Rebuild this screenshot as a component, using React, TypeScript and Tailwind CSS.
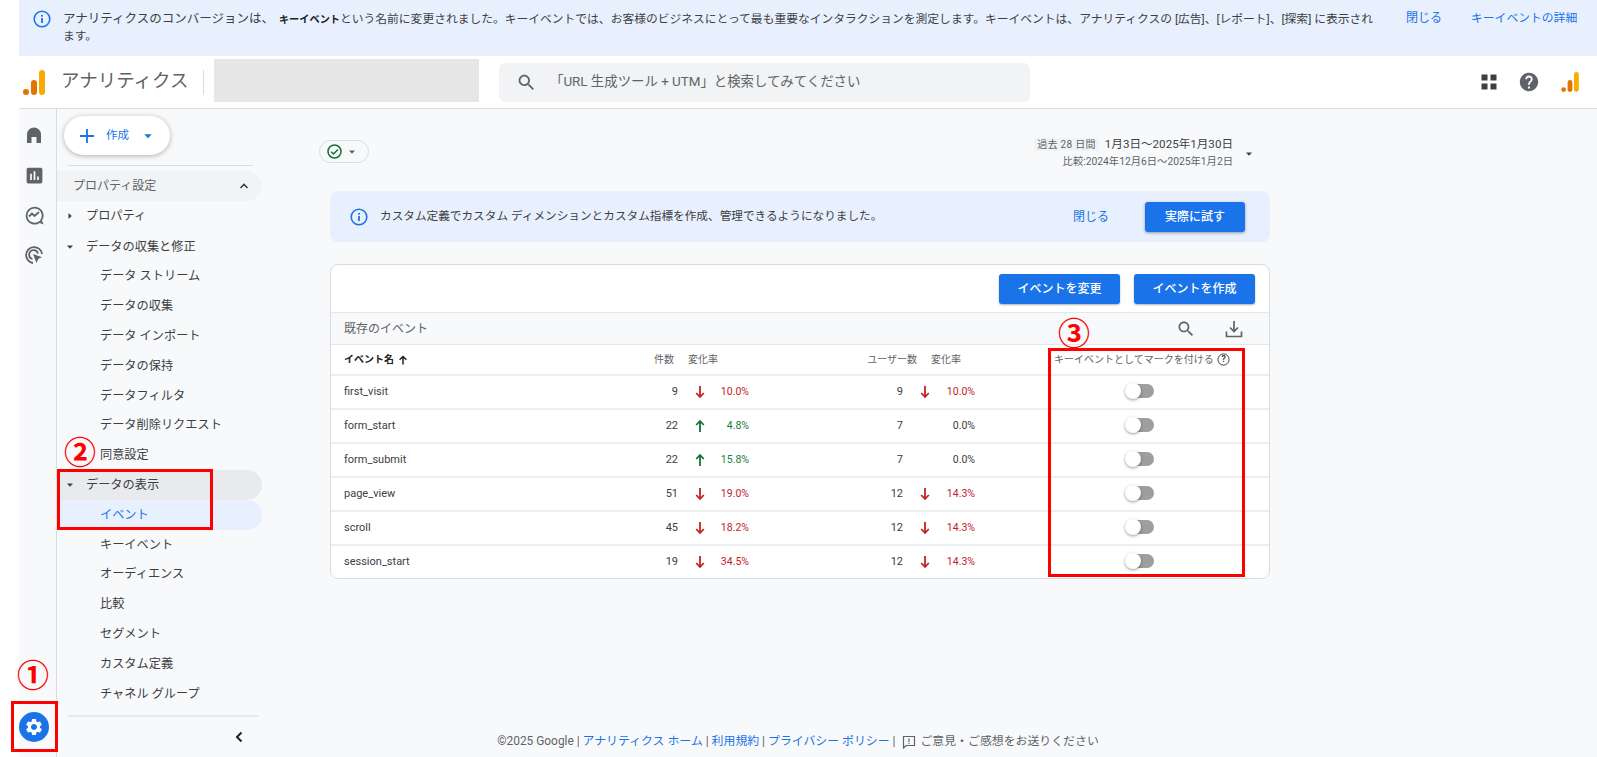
import React from "react";

const GEAR = "M19.14 12.94c.04-.3.06-.61.06-.94 0-.32-.02-.64-.07-.94l2.03-1.58c.18-.14.23-.41.12-.61l-1.92-3.32c-.12-.22-.37-.29-.59-.22l-2.39.96c-.5-.38-1.03-.7-1.62-.94l-.36-2.54c-.04-.24-.24-.41-.48-.41h-3.84c-.24 0-.43.17-.47.41l-.36 2.54c-.59.24-1.13.57-1.62.94l-2.39-.96c-.22-.08-.47 0-.59.22L2.74 8.87c-.12.21-.08.47.12.61l2.03 1.58c-.05.3-.09.63-.09.94s.02.64.07.94l-2.03 1.58c-.18.14-.23.41-.12.61l1.92 3.32c.12.22.37.29.59.22l2.39-.96c.5.38 1.03.7 1.62.94l.36 2.54c.05.24.24.41.48.41h3.84c.24 0 .44-.17.47-.41l.36-2.54c.59-.24 1.13-.56 1.62-.94l2.39.96c.22.08.47 0 .59-.22l1.92-3.32c.12-.22.07-.47-.12-.61l-2.01-1.58zM12 15.6c-1.98 0-3.6-1.62-3.6-3.6s1.62-3.6 3.6-3.6 3.6 1.62 3.6 3.6-1.62 3.6-3.6 3.6z";
const SEARCH = "M15.5 14h-.79l-.28-.27C15.41 12.59 16 11.11 16 9.5 16 5.91 13.09 3 9.5 3S3 5.91 3 9.5 5.91 16 9.5 16c1.61 0 3.09-.59 4.23-1.57l.27.28v.79l5 4.99L20.49 19l-4.99-5zm-6 0C7.01 14 5 11.99 5 9.5S7.01 5 9.5 5 14 7.01 14 9.5 11.99 14 9.5 14z";
const HELP = "M12 2C6.48 2 2 6.48 2 12s4.48 10 10 10 10-4.48 10-10S17.52 2 12 2zm1 17h-2v-2h2v2zm2.07-7.75l-.9.92C13.45 12.9 13 13.5 13 15h-2v-.5c0-1.1.45-2.1 1.17-2.83l1.24-1.26c.37-.36.59-.86.59-1.41 0-1.1-.9-2-2-2s-2 .9-2 2H8c0-2.21 1.79-4 4-4s4 1.79 4 4c0 .88-.36 1.68-.93 2.25z";

function Logo({ w, h }: { w: number; h: number }) {
  return (
    <svg width={w} height={h} viewBox="0 0 22 25">
      <circle cx="3" cy="22" r="3" fill="#e37400" />
      <rect x="8" y="10" width="6" height="15" rx="3" fill="#e37400" />
      <rect x="16" y="0" width="6" height="25" rx="3" fill="#f9ab00" />
    </svg>
  );
}

function Info() {
  return (
    <svg width="20" height="20" viewBox="0 0 20 20" fill="none">
      <circle cx="10" cy="10" r="7.8" stroke="#1a73e8" strokeWidth="1.6" />
      <rect x="9.1" y="9" width="1.8" height="5" fill="#1a73e8" />
      <rect x="9.1" y="5.9" width="1.8" height="1.8" fill="#1a73e8" />
    </svg>
  );
}

function Caret({ open, color = "#3c4043", size = 8 }: { open: boolean; color?: string; size?: number }) {
  return (
    <svg width={size} height={size} viewBox="0 0 8 8">
      {open ? <path d="M1 2.5h6L4 5.8z" fill={color} /> : <path d="M2.5 1v6L5.8 4z" fill={color} />}
    </svg>
  );
}

function Arrow({ up }: { up: boolean }) {
  const c = up ? "#137333" : "#c5221f";
  return (
    <svg width="14" height="14" viewBox="0 0 14 14" fill="none">
      {up ? (
        <path d="M7 13V2M3.2 6L7 2l3.8 4" stroke={c} strokeWidth="1.8" />
      ) : (
        <path d="M7 1v11M3.2 8L7 12l3.8-4" stroke={c} strokeWidth="1.8" />
      )}
    </svg>
  );
}

function Toggle() {
  return (
    <div className="relative h-[14px] w-[29px]">
      <div className="absolute left-[6px] top-0 h-[14px] w-[23px] rounded-full bg-[#9e9e9e]" />
      <div className="absolute left-0 top-[-1px] h-[16px] w-[16px] rounded-full bg-white shadow-[0_1px_3px_rgba(0,0,0,0.4)]" />
    </div>
  );
}

function Mark({ n, className }: { n: string; className: string }) {
  return (
    <div className={`absolute flex h-[36px] w-[36px] items-center justify-center text-[32px] font-bold leading-none text-[#ff0000] font-['Noto_Sans_CJK_JP',sans-serif] ${className}`}>
      {n}
    </div>
  );
}

const navTop = "flex h-[29.8px] items-center pl-[9px] text-[12.2px] text-[#3c4043]";
const navSub = "flex h-[29.8px] items-center pl-[43px] text-[12.2px] text-[#3c4043]";

function Sidebar() {
  return (
    <aside className="flex w-[205px] shrink-0 flex-col">
      <div className="ml-[7px] mt-[7px] flex h-[39px] w-[106px] items-center rounded-full bg-white shadow-[0_1px_5px_rgba(60,64,67,0.4)]">
        <svg className="ml-[16px]" width="14" height="14" viewBox="0 0 14 14">
          <path d="M7 0v14M0 7h14" stroke="#1a73e8" strokeWidth="1.8" />
        </svg>
        <span className="ml-[12px] text-[11.5px] text-[#1a73e8]">作成</span>
        <span className="ml-[14px]">
          <Caret open color="#1a73e8" size={10} />
        </span>
      </div>
      <div className="ml-[11px] mt-[10px] h-px w-[185px] bg-[#dadce0]" />
      <div className="mt-[5px] flex h-[30px] items-center justify-between rounded-r-full bg-[#f1f3f4] pl-[16px] pr-[12px] text-[12px] text-[#5f6368]">
        <span>プロパティ設定</span>
        <svg width="12" height="12" viewBox="0 0 12 12" fill="none">
          <path d="M2.5 8L6 4.5 9.5 8" stroke="#3c4043" strokeWidth="1.6" />
        </svg>
      </div>
      <div className={navTop}>
        <Caret open={false} />
        <span className="ml-[12px]">プロパティ</span>
      </div>
      <div className={`${navTop} mt-[1px]`}>
        <Caret open />
        <span className="ml-[12px]">データの収集と修正</span>
      </div>
      {["データ ストリーム", "データの収集", "データ インポート", "データの保持", "データフィルタ", "データ削除リクエスト", "同意設定"].map((t) => (
        <div key={t} className={navSub}>{t}</div>
      ))}
      <div className={`${navTop} rounded-r-full bg-[#e8eaed]`}>
        <Caret open />
        <span className="ml-[12px]">データの表示</span>
      </div>
      <div className="flex h-[29.8px] items-center rounded-r-full bg-[#e8f0fe] pl-[43px] text-[12.2px] text-[#1a73e8]">イベント</div>
      {["キーイベント", "オーディエンス", "比較", "セグメント", "カスタム定義", "チャネル グループ"].map((t) => (
        <div key={t} className={navSub}>{t}</div>
      ))}
      <div className="ml-[11px] mt-auto flex h-[42px] w-[191px] items-center justify-end border-t-2 border-[#e8eaed] pr-[13px]">
        <svg width="14" height="14" viewBox="0 0 14 14" fill="none">
          <path d="M9.5 2.5L5 7l4.5 4.5" stroke="#202124" strokeWidth="2" />
        </svg>
      </div>
    </aside>
  );
}

function Rail() {
  return (
    <nav className="flex w-[38px] shrink-0 flex-col items-start border-r border-[#dadce0]">
      <div className="mt-[14px] flex h-[24px] w-[30px] items-center justify-center">
        <svg width="20" height="20" viewBox="0 0 20 20">
          <path d="M3 18V9.5a7 7 0 0 1 14 0V18h-4.5v-6h-5v6z" fill="#5f6368" />
        </svg>
      </div>
      <div className="mt-[16px] flex h-[24px] w-[30px] items-center justify-center">
        <svg width="21" height="21" viewBox="0 0 24 24">
          <path d="M19 3H5c-1.1 0-2 .9-2 2v14c0 1.1.9 2 2 2h14c1.1 0 2-.9 2-2V5c0-1.1-.9-2-2-2zM9 17H7v-7h2v7zm4 0h-2V7h2v10zm4 0h-2v-4h2v4z" fill="#5f6368" />
        </svg>
      </div>
      <div className="mt-[16px] flex h-[24px] w-[30px] items-center justify-center">
        <svg width="20" height="20" viewBox="0 0 20 20" fill="none">
          <path d="M17 15.5A8 8 0 1 0 15.5 17L18 18z" stroke="#5f6368" strokeWidth="1.8" />
          <path d="M5 11.5l3-3 2.5 2.5L15 7" stroke="#5f6368" strokeWidth="1.8" />
        </svg>
      </div>
      <div className="mt-[16px] flex h-[24px] w-[30px] items-center justify-center">
        <svg width="20" height="20" viewBox="0 0 20 20" fill="none">
          <path d="M9 18A8 8 0 1 1 18 9" stroke="#5f6368" strokeWidth="1.8" />
          <path d="M8.5 14A4.5 4.5 0 1 1 14 8.5" stroke="#5f6368" strokeWidth="1.8" />
          <path d="M9 9l9 3.2-3.6 1.6L12.5 18z" fill="#5f6368" />
        </svg>
      </div>
      <div className="mb-[15px] mt-auto flex h-[30px] w-[30px] items-center justify-center rounded-full bg-[#1a73e8]">
        <svg width="20" height="20" viewBox="0 0 24 24">
          <path d={GEAR} fill="#fff" />
        </svg>
      </div>
    </nav>
  );
}

const rows: [string, string, boolean, string, string, boolean | null, string][] = [
  ["first_visit", "9", false, "10.0%", "9", false, "10.0%"],
  ["form_start", "22", true, "4.8%", "7", null, "0.0%"],
  ["form_submit", "22", true, "15.8%", "7", null, "0.0%"],
  ["page_view", "51", false, "19.0%", "12", false, "14.3%"],
  ["scroll", "45", false, "18.2%", "12", false, "14.3%"],
  ["session_start", "19", false, "34.5%", "12", false, "14.3%"],
];

function Table() {
  return (
    <section className="mt-[22px] w-[940px] overflow-hidden rounded-lg border border-[#dadce0] bg-white">
      <div className="flex h-[47px] items-center justify-end gap-[14px] pr-[14px]">
        {["イベントを変更", "イベントを作成"].map((t) => (
          <button key={t} className="flex h-[30px] w-[121px] items-center justify-center rounded-[3px] bg-[#1a73e8] text-[12px] font-medium text-white shadow-[0_1px_2px_rgba(60,64,67,0.4)]">
            {t}
          </button>
        ))}
      </div>
      <div className="flex h-[33px] items-center border-y border-[#e4e6e9] bg-[#f8f9fa] pl-[13px] text-[12px] text-[#5f6368]">
        <span>既存のイベント</span>
        <svg className="ml-[748px]" width="20" height="20" viewBox="0 0 24 24">
          <path d={SEARCH} fill="#5f6368" />
        </svg>
        <svg className="ml-[28px]" width="20" height="20" viewBox="0 0 20 20" fill="none">
          <path d="M10 2v10M6 8.5l4 4 4-4M2.5 12.5v5h15v-5" stroke="#5f6368" strokeWidth="1.7" />
        </svg>
      </div>
      <div className="flex h-[29px] items-center pl-[13px] text-[10px] text-[#5f6368]">
        <div className="flex w-[300px] items-center gap-[4px] font-bold text-[#202124]">
          <span>イベント名</span>
          <svg width="10" height="10" viewBox="0 0 10 10" fill="none">
            <path d="M5 9.5V1.5M1.6 4.8L5 1.5l3.4 3.3" stroke="#202124" strokeWidth="1.5" />
          </svg>
        </div>
        <div className="w-[30px] text-right">件数</div>
        <div className="ml-[14px] w-[29px] whitespace-nowrap">変化率</div>
        <div className="w-[200px] text-right">ユーザー数</div>
        <div className="ml-[14px] w-[29px] whitespace-nowrap">変化率</div>
        <div className="ml-[94px] flex items-center gap-[3px] whitespace-nowrap">
          <span>キーイベントとしてマークを付ける</span>
          <svg width="13" height="13" viewBox="0 0 13 13" fill="none">
            <circle cx="6.5" cy="6.5" r="5.6" stroke="#3c4043" />
            <text x="6.5" y="9.4" textAnchor="middle" fontSize="8.5" fontWeight="700" fill="#3c4043">?</text>
          </svg>
        </div>
      </div>
      {rows.map((r) => (
        <div key={r[0]} className="flex h-[34px] items-center border-t-2 border-[#eceef0] pl-[13px] text-[11px] text-[#3c4043]">
          <div className="w-[296px]">{r[0]}</div>
          <div className="w-[38px] text-right text-[#3c4043]">{r[1]}</div>
          <div className="ml-[15px] flex w-[21px] items-center">
            <Arrow up={r[2]} />
          </div>
          <div className={`w-[35px] text-right text-[10.5px] ${r[2] ? "text-[#188038]" : "text-[#c5221f]"}`}>{r[3]}</div>
          <div className="w-[154px] text-right">{r[4]}</div>
          <div className="ml-[15px] flex w-[21px] items-center">
            {r[5] !== null && <Arrow up={r[5]} />}
          </div>
          <div className={`w-[36px] text-right text-[10.5px] ${r[5] === null ? "text-[#3c4043]" : "text-[#c5221f]"}`}>{r[6]}</div>
          <div className="mb-[2px] ml-[150px]">
            <Toggle />
          </div>
        </div>
      ))}
    </section>
  );
}

export default function App() {
  return (
    <div className="relative flex h-[757px] w-full overflow-hidden bg-white font-[Roboto,'Noto_Sans_CJK_JP',sans-serif]">
      <div className="w-[19px] shrink-0 bg-white" />
      <div className="flex min-w-0 flex-1 flex-col">
        <div className="flex h-[56px] shrink-0 bg-[#e8f0fe]">
          <div className="ml-[13px] mt-[9px]">
            <Info />
          </div>
          <p className="ml-[11px] mt-[10px] w-[1312px] text-[11.78px] leading-[17px] text-[#3c4043]">
            <span className="text-[12.5px]">アナリティクスのコンバージョンは、</span>
            <b className="ml-[5px] text-[10.2px] font-bold text-[#202124]">キーイベント</b>
            <span>という名前に変更されました。キーイベントでは、お客様のビジネスにとって最も重要なインタラクションを測定します。キーイベントは、アナリティクスの [広告]、[レポート]、[探索] に表示されます。</span>
          </p>
          <span className="ml-[31px] mt-[10px] text-[12px] leading-[17px] text-[#1a73e8]">閉じる</span>
          <span className="ml-[29px] mt-[10px] text-[11.8px] leading-[17px] text-[#1a73e8]">キーイベントの詳細</span>
        </div>
        <header className="flex h-[53px] shrink-0 items-center border-b border-[#dadce0] bg-white">
          <div className="ml-[4px] flex">
            <Logo w={22} h={25} />
          </div>
          <span className="ml-[16px] w-[142px] text-[18.5px] text-[#5f6368]">アナリティクス</span>
          <div className="h-[25px] w-px bg-[#dadce0]" />
          <div className="mb-[4px] ml-[10px] h-[43px] w-[265px] bg-[#e6e6e6]" />
          <div className="ml-[20px] flex h-[39px] w-[531px] items-center rounded-md bg-[#f1f3f4] pl-[17px] text-[13.4px] text-[#5f6368]">
            <svg width="21" height="21" viewBox="0 0 24 24">
              <path d={SEARCH} fill="#5f6368" />
            </svg>
            <span className="ml-[13px]">「URL 生成ツール + UTM」と検索してみてください</span>
          </div>
          <div className="ml-auto flex items-center pr-[18px]">
            <svg width="18" height="18" viewBox="0 0 18 18">
              <path d="M1.5 1.5h6v6h-6zM10.5 1.5h6v6h-6zM1.5 10.5h6v6h-6zM10.5 10.5h6v6h-6z" fill="#3c4043" />
            </svg>
            <svg className="ml-[20px]" width="22" height="22" viewBox="0 0 24 24">
              <path d={HELP} fill="#5f6368" />
            </svg>
            <div className="ml-[21px] flex">
              <Logo w={18} h={20} />
            </div>
          </div>
        </header>
        <div className="flex min-h-0 flex-1 bg-[#f8f9fb]">
          <Rail />
          <Sidebar />
          <main className="flex min-w-0 flex-1 flex-col">
            <div className="ml-[68px] flex w-[940px] flex-col">
              <div className="flex h-[82px] w-full">
                <div className="ml-[-11px] mt-[31px] flex h-[23px] w-[50px] items-center rounded-full border border-[#dadce0] pl-[7px]">
                  <svg width="15" height="15" viewBox="0 0 15 15" fill="none">
                    <circle cx="7.5" cy="7.5" r="6.5" stroke="#137333" strokeWidth="1.5" />
                    <path d="M4.2 7.7l2.4 2.3 4.3-4.4" stroke="#137333" strokeWidth="1.5" />
                  </svg>
                  <span className="ml-[6px]">
                    <Caret open color="#5f6368" size={8} />
                  </span>
                </div>
                <div className="ml-auto mr-[37px] mt-[27px] flex flex-col items-end text-[#5f6368]">
                  <div className="flex items-center gap-[6px]">
                    <span className="flex h-[13px] items-center rounded-[2px] bg-[#f1f3f4] px-[3px] text-[10px] tracking-[0.3px]">過去 28 日間</span>
                    <span className="text-[11.6px] leading-[16px] text-[#3c4043]">1月3日〜2025年1月30日</span>
                  </div>
                  <span className="mt-[2px] text-[10.3px] leading-[16px]">比較:2024年12月6日〜2025年1月2日</span>
                </div>
                <div className="absolute left-[1245px] top-[150px]">
                  <Caret open color="#3c4043" />
                </div>
              </div>
              <div className="flex h-[51px] w-full items-center rounded-lg bg-[#e8f0fe] pl-[19px] pr-[25px]">
                <Info />
                <span className="ml-[11px] text-[11.65px] text-[#3c4043]">カスタム定義でカスタム ディメンションとカスタム指標を作成、管理できるようになりました。</span>
                <span className="ml-auto text-[12px] text-[#1a73e8]">閉じる</span>
                <button className="ml-[36px] flex h-[30px] w-[100px] items-center justify-center rounded-[3px] bg-[#1a73e8] text-[12px] font-medium text-white shadow-[0_1px_3px_rgba(60,64,67,0.5)]">
                  実際に試す
                </button>
              </div>
              <Table />
            </div>
            <footer className="mb-[6px] ml-[66px] mt-auto flex w-[940px] items-center justify-center text-[11.9px] text-[#5f6368]">
              <span>©2025 Google |&nbsp;</span>
              <span className="text-[#1a73e8]">アナリティクス ホーム</span>
              <span>&nbsp;|&nbsp;</span>
              <span className="text-[#1a73e8]">利用規約</span>
              <span>&nbsp;|&nbsp;</span>
              <span className="text-[#1a73e8]">プライバシー ポリシー</span>
              <span>&nbsp;|&nbsp;</span>
              <svg className="mx-[4px]" width="14" height="14" viewBox="0 0 14 14" fill="none">
                <path d="M1.5 1.5h11v9H4L1.5 13z" stroke="#5f6368" strokeWidth="1.2" />
                <path d="M7 3.5v3.5M7 8v1" stroke="#5f6368" strokeWidth="1.2" />
              </svg>
              <span>ご意見・ご感想をお送りください</span>
            </footer>
          </main>
        </div>
      </div>

      <div className="absolute left-[11px] top-[701px] h-[51px] w-[47px] border-[3px] border-[#ff0000]" />
      <div className="absolute left-[57px] top-[469px] h-[61px] w-[156px] border-[3px] border-[#ff0000]" />
      <div className="absolute left-[1048px] top-[348px] h-[229px] w-[197px] border-[3px] border-[#ff0000]" />
      <Mark n="①" className="left-[15px] top-[655px]" />
      <Mark n="②" className="left-[62px] top-[432px]" />
      <Mark n="③" className="left-[1056px] top-[313px]" />
    </div>
  );
}
